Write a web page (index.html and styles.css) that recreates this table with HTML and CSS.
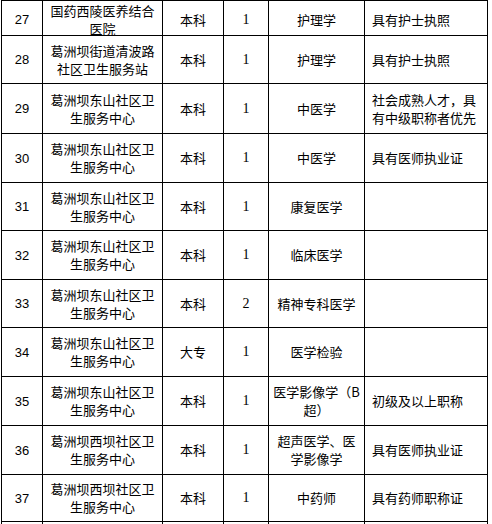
FILE: index.html
```html
<!DOCTYPE html>
<html lang="zh-CN">
<head>
<meta charset="utf-8">
<title>招聘岗位表</title>
<link rel="stylesheet" href="styles.css">
</head>
<body>
<div class="sheet">
  <div class="cell num first"><span>27</span></div>
  <div class="cell unit first"><span>国药西陵医养结合<br>医院</span></div>
  <div class="cell edu first"><span>本科</span></div>
  <div class="cell cnt first"><span>1</span></div>
  <div class="cell major first"><span>护理学</span></div>
  <div class="cell req first"><span>具有护士执照</span></div>

  <div class="cell num"><span>28</span></div>
  <div class="cell unit"><span>葛洲坝街道清波路<br>社区卫生服务站</span></div>
  <div class="cell edu"><span>本科</span></div>
  <div class="cell cnt"><span>1</span></div>
  <div class="cell major"><span>护理学</span></div>
  <div class="cell req"><span>具有护士执照</span></div>

  <div class="cell num"><span>29</span></div>
  <div class="cell unit"><span>葛洲坝东山社区卫<br>生服务中心</span></div>
  <div class="cell edu"><span>本科</span></div>
  <div class="cell cnt"><span>1</span></div>
  <div class="cell major"><span>中医学</span></div>
  <div class="cell req"><span>社会成熟人才，具<br>有中级职称者优先</span></div>

  <div class="cell num"><span>30</span></div>
  <div class="cell unit"><span>葛洲坝东山社区卫<br>生服务中心</span></div>
  <div class="cell edu"><span>本科</span></div>
  <div class="cell cnt"><span>1</span></div>
  <div class="cell major"><span>中医学</span></div>
  <div class="cell req"><span>具有医师执业证</span></div>

  <div class="cell num"><span>31</span></div>
  <div class="cell unit"><span>葛洲坝东山社区卫<br>生服务中心</span></div>
  <div class="cell edu"><span>本科</span></div>
  <div class="cell cnt"><span>1</span></div>
  <div class="cell major"><span>康复医学</span></div>
  <div class="cell req"></div>

  <div class="cell num"><span>32</span></div>
  <div class="cell unit"><span>葛洲坝东山社区卫<br>生服务中心</span></div>
  <div class="cell edu"><span>本科</span></div>
  <div class="cell cnt"><span>1</span></div>
  <div class="cell major"><span>临床医学</span></div>
  <div class="cell req"></div>

  <div class="cell num"><span>33</span></div>
  <div class="cell unit"><span>葛洲坝东山社区卫<br>生服务中心</span></div>
  <div class="cell edu"><span>本科</span></div>
  <div class="cell cnt"><span>2</span></div>
  <div class="cell major"><span>精神专科医学</span></div>
  <div class="cell req"></div>

  <div class="cell num"><span>34</span></div>
  <div class="cell unit"><span>葛洲坝东山社区卫<br>生服务中心</span></div>
  <div class="cell edu"><span>大专</span></div>
  <div class="cell cnt"><span>1</span></div>
  <div class="cell major"><span>医学检验</span></div>
  <div class="cell req"></div>

  <div class="cell num"><span>35</span></div>
  <div class="cell unit"><span>葛洲坝东山社区卫<br>生服务中心</span></div>
  <div class="cell edu"><span>本科</span></div>
  <div class="cell cnt"><span>1</span></div>
  <div class="cell major"><span>医学影像学（B<br>超）</span></div>
  <div class="cell req"><span>初级及以上职称</span></div>

  <div class="cell num"><span>36</span></div>
  <div class="cell unit"><span>葛洲坝西坝社区卫<br>生服务中心</span></div>
  <div class="cell edu"><span>本科</span></div>
  <div class="cell cnt"><span>1</span></div>
  <div class="cell major"><span>超声医学、医<br>学影像学</span></div>
  <div class="cell req"><span>具有医师执业证</span></div>

  <div class="cell num"><span>37</span></div>
  <div class="cell unit"><span>葛洲坝西坝社区卫<br>生服务中心</span></div>
  <div class="cell edu"><span>本科</span></div>
  <div class="cell cnt"><span>1</span></div>
  <div class="cell major"><span>中药师</span></div>
  <div class="cell req"><span>具有药师职称证</span></div>

  <div class="cell filler"></div>
  <div class="cell filler"></div>
  <div class="cell filler"></div>
  <div class="cell filler"></div>
  <div class="cell filler"></div>
  <div class="cell filler"></div>
</div>
</body>
</html>
```

FILE: styles.css
```css
html, body {
  margin: 0;
  padding: 0;
  background: #ffffff;
  overflow: hidden;
}

body {
  font-family: "Noto Sans CJK SC", "Noto Sans", sans-serif;
  font-size: 13px;
  line-height: 18px;
  color: #000000;
}

.sheet {
  display: grid;
  grid-template-columns: 41px 120px 61px 45px 96px 123px;
  grid-template-rows: 35px 48px 50px 49px 48px 49px 48px 49px 49px 49px 47px 2px;
  width: max-content;
  margin-left: 1px;
  border-left: 1px solid #000;
  border-top: 1px solid #000;
}

.cell {
  box-sizing: border-box;
  border-right: 1px solid #000;
  border-bottom: 1px solid #000;
  display: flex;
  justify-content: center;
  align-items: center;
  text-align: center;
  white-space: nowrap;
}

.cell span {
  display: block;
}

.num {
  font-family: "Liberation Sans", "DejaVu Sans", sans-serif;
  padding-top: 1px;
}

.cnt {
  font-family: "Liberation Serif", serif;
  font-size: 14px;
}

.req {
  justify-content: flex-start;
  text-align: left;
  padding-left: 7px;
}

.first {
  padding-top: 4px;
}

.filler {
  border-bottom: none;
}
```
